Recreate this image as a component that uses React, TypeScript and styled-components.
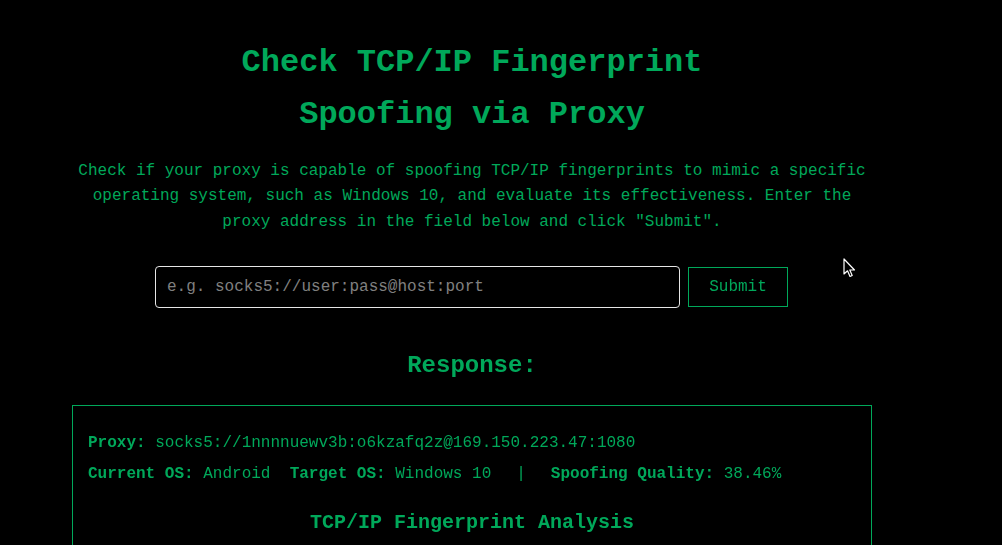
import styled, { createGlobalStyle } from 'styled-components';

const GREEN = '#00a85a';

const GlobalStyle = createGlobalStyle`
  html, body {
    margin: 0;
    padding: 0;
    background: #000;
    color: ${GREEN};
    font-family: "Liberation Mono", "Courier New", monospace;
  }
  body {
    overflow: hidden;
  }
`;

const Page = styled.div`
  position: relative;
  height: 545px;
  overflow: hidden;
`;

const Container = styled.main`
  width: 800px;
  margin: 0 0 0 72px;
  padding-top: 37px;
  display: flex;
  flex-direction: column;
  align-items: center;
`;

const Title = styled.h1`
  margin: 0;
  font-size: 32px;
  font-weight: bold;
  line-height: 52px;
  text-align: center;
  width: 520px;
`;

const Intro = styled.p`
  margin: 18px 0 0;
  font-size: 16px;
  line-height: 25.3px;
  text-align: center;
  width: 800px;
`;

const Form = styled.form`
  display: flex;
  align-items: center;
  gap: 8px;
  margin-top: 31px;
  margin-right: 1px;
`;

const ProxyInput = styled.input`
  box-sizing: border-box;
  width: 525px;
  height: 42px;
  padding: 0 11px;
  background: #000;
  border: 1px solid #e6e6e6;
  border-radius: 4px;
  color: ${GREEN};
  caret-color: ${GREEN};
  font-family: inherit;
  font-size: 16px;
  outline: none;

  &::placeholder {
    color: #808080;
  }
`;

const SubmitButton = styled.button`
  box-sizing: border-box;
  width: 100px;
  height: 40px;
  background: #000;
  border: 1px solid ${GREEN};
  border-radius: 0;
  color: ${GREEN};
  font-family: inherit;
  font-size: 16px;
  cursor: pointer;
`;

const SectionTitle = styled.h2<{ $size: number }>`
  margin: 0;
  font-size: ${p => p.$size}px;
  font-weight: bold;
  line-height: 1.6;
  text-align: center;
`;

const ResponseHeading = styled(SectionTitle)`
  margin-top: 39px;
`;

const ResultBox = styled.section`
  box-sizing: border-box;
  width: 800px;
  margin-top: 20px;
  padding: 25px 15px 20px;
  border: 1px solid ${GREEN};
  min-height: 200px;
`;

const Line = styled.p`
  margin: 0 0 5.4px;
  font-size: 16px;
  line-height: 25.6px;
  white-space: pre;
`;

const Label = styled.strong`
  font-weight: bold;
`;

const Item = styled.span`
  margin-right: 19.2px;
  &:last-child {
    margin-right: 0;
  }
`;

const Separator = styled.span`
  margin: 0 25px 0 5.8px;
`;

const AnalysisHeading = styled(SectionTitle)`
  margin-top: 19px;
`;

const Cursor = styled.svg`
  position: absolute;
  left: 843px;
  top: 258px;
`;

export default function App() {
  return (
    <Page>
      <GlobalStyle />
      <Container>
        <Title>Check TCP/IP Fingerprint Spoofing via Proxy</Title>
        <Intro>
          Check if your proxy is capable of spoofing TCP/IP fingerprints to mimic a specific
          operating system, such as Windows 10, and evaluate its effectiveness. Enter the
          proxy address in the field below and click "Submit".
        </Intro>
        <Form onSubmit={e => e.preventDefault()}>
          <ProxyInput autoFocus placeholder="e.g. socks5://user:pass@host:port" />
          <SubmitButton type="submit">Submit</SubmitButton>
        </Form>
        <ResponseHeading $size={24}>Response:</ResponseHeading>
        <ResultBox>
          <Line>
            <Label>Proxy:</Label> socks5://1nnnnuewv3b:o6kzafq2z@169.150.223.47:1080
          </Line>
          <Line>
            <Item>
              <Label>Current OS:</Label> Android
            </Item>
            <Item>
              <Label>Target OS:</Label> Windows 10
            </Item>
            <Separator>|</Separator>
            <Item>
              <Label>Spoofing Quality:</Label> 38.46%
            </Item>
          </Line>
          <AnalysisHeading $size={20}>TCP/IP Fingerprint Analysis</AnalysisHeading>
        </ResultBox>
      </Container>
      <Cursor width="14" height="22" viewBox="0 0 14 22">
        <path
          d="M1 1 L1 16 L4.5 12.8 L7 18.5 L9.2 17.5 L6.8 12 L11.5 12 Z"
          fill="#000"
          stroke="#fff"
          strokeWidth="1.2"
          strokeLinejoin="round"
        />
      </Cursor>
    </Page>
  );
}
